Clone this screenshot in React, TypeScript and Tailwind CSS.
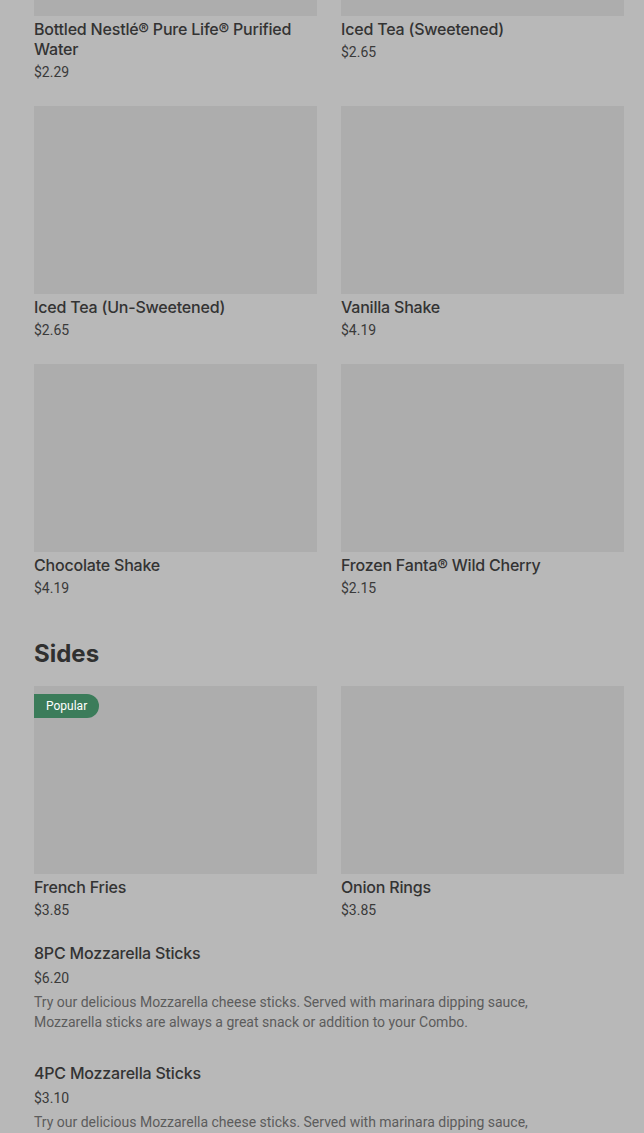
const drinks = [
  { name: "Bottled Nestlé® Pure Life® Purified Water", price: "$2.29" },
  { name: "Iced Tea (Sweetened)", price: "$2.65" },
  { name: "Iced Tea (Un-Sweetened)", price: "$2.65" },
  { name: "Vanilla Shake", price: "$4.19" },
  { name: "Chocolate Shake", price: "$4.19" },
  { name: "Frozen Fanta® Wild Cherry", price: "$2.15" },
];

const sides = [
  { name: "French Fries", price: "$3.85", popular: true },
  { name: "Onion Rings", price: "$3.85" },
];

const desc =
  "Try our delicious Mozzarella cheese sticks. Served with marinara dipping sauce, Mozzarella sticks are always a great snack or addition to your Combo.";

const listItems = [
  { name: "8PC Mozzarella Sticks", price: "$6.20" },
  { name: "4PC Mozzarella Sticks", price: "$3.10" },
];

function Card({ name, price, popular }: { name: string; price: string; popular?: boolean }) {
  return (
    <div className="flex flex-col">
      <div className="relative h-[188px] bg-[#adadad]">
        {popular && (
          <span className="absolute left-0 top-2 h-6 px-3 rounded-r-full bg-[#3b7c5a] text-white text-xs leading-6 font-[Roboto,sans-serif]">
            Popular
          </span>
        )}
      </div>
      <div className="mt-[3px] text-base leading-5 font-medium tracking-[-0.2px] text-[#333333]">{name}</div>
      <div className="mt-[3px] text-sm leading-5 text-[#3a3a3a] font-[Roboto,sans-serif]">{price}</div>
    </div>
  );
}

export default function App() {
  return (
    <div
      className="min-h-screen bg-[#b8b8b8] overflow-hidden"
      style={{ fontFamily: "Inter, 'Noto Sans', sans-serif" }}
    >
      <div className="pl-[34px] pr-5 -mt-[172px] pb-10">
        <div className="grid grid-cols-2 gap-x-6 gap-y-6">
          {drinks.map((d) => (
            <Card key={d.name} {...d} />
          ))}
        </div>

        <h2 className="mt-10 mb-4 h-8 text-2xl leading-8 font-bold text-[#303030]">Sides</h2>

        <div className="grid grid-cols-2 gap-x-6 gap-y-6">
          {sides.map((d) => (
            <Card key={d.name} {...d} />
          ))}
        </div>

        <div className="mt-[23px] flex flex-col gap-[31px]">
          {listItems.map((it) => (
            <div key={it.name} className="flex flex-col">
              <div className="text-base leading-5 font-medium tracking-[-0.2px] text-[#333333]">{it.name}</div>
              <div className="mt-[5px] text-sm leading-5 text-[#3a3a3a] font-[Roboto,sans-serif]">{it.price}</div>
              <p className="mt-1 max-w-[560px] text-sm leading-5 text-[#5c5c5c] font-[Roboto,sans-serif]">{desc}</p>
            </div>
          ))}
        </div>
      </div>
    </div>
  );
}
